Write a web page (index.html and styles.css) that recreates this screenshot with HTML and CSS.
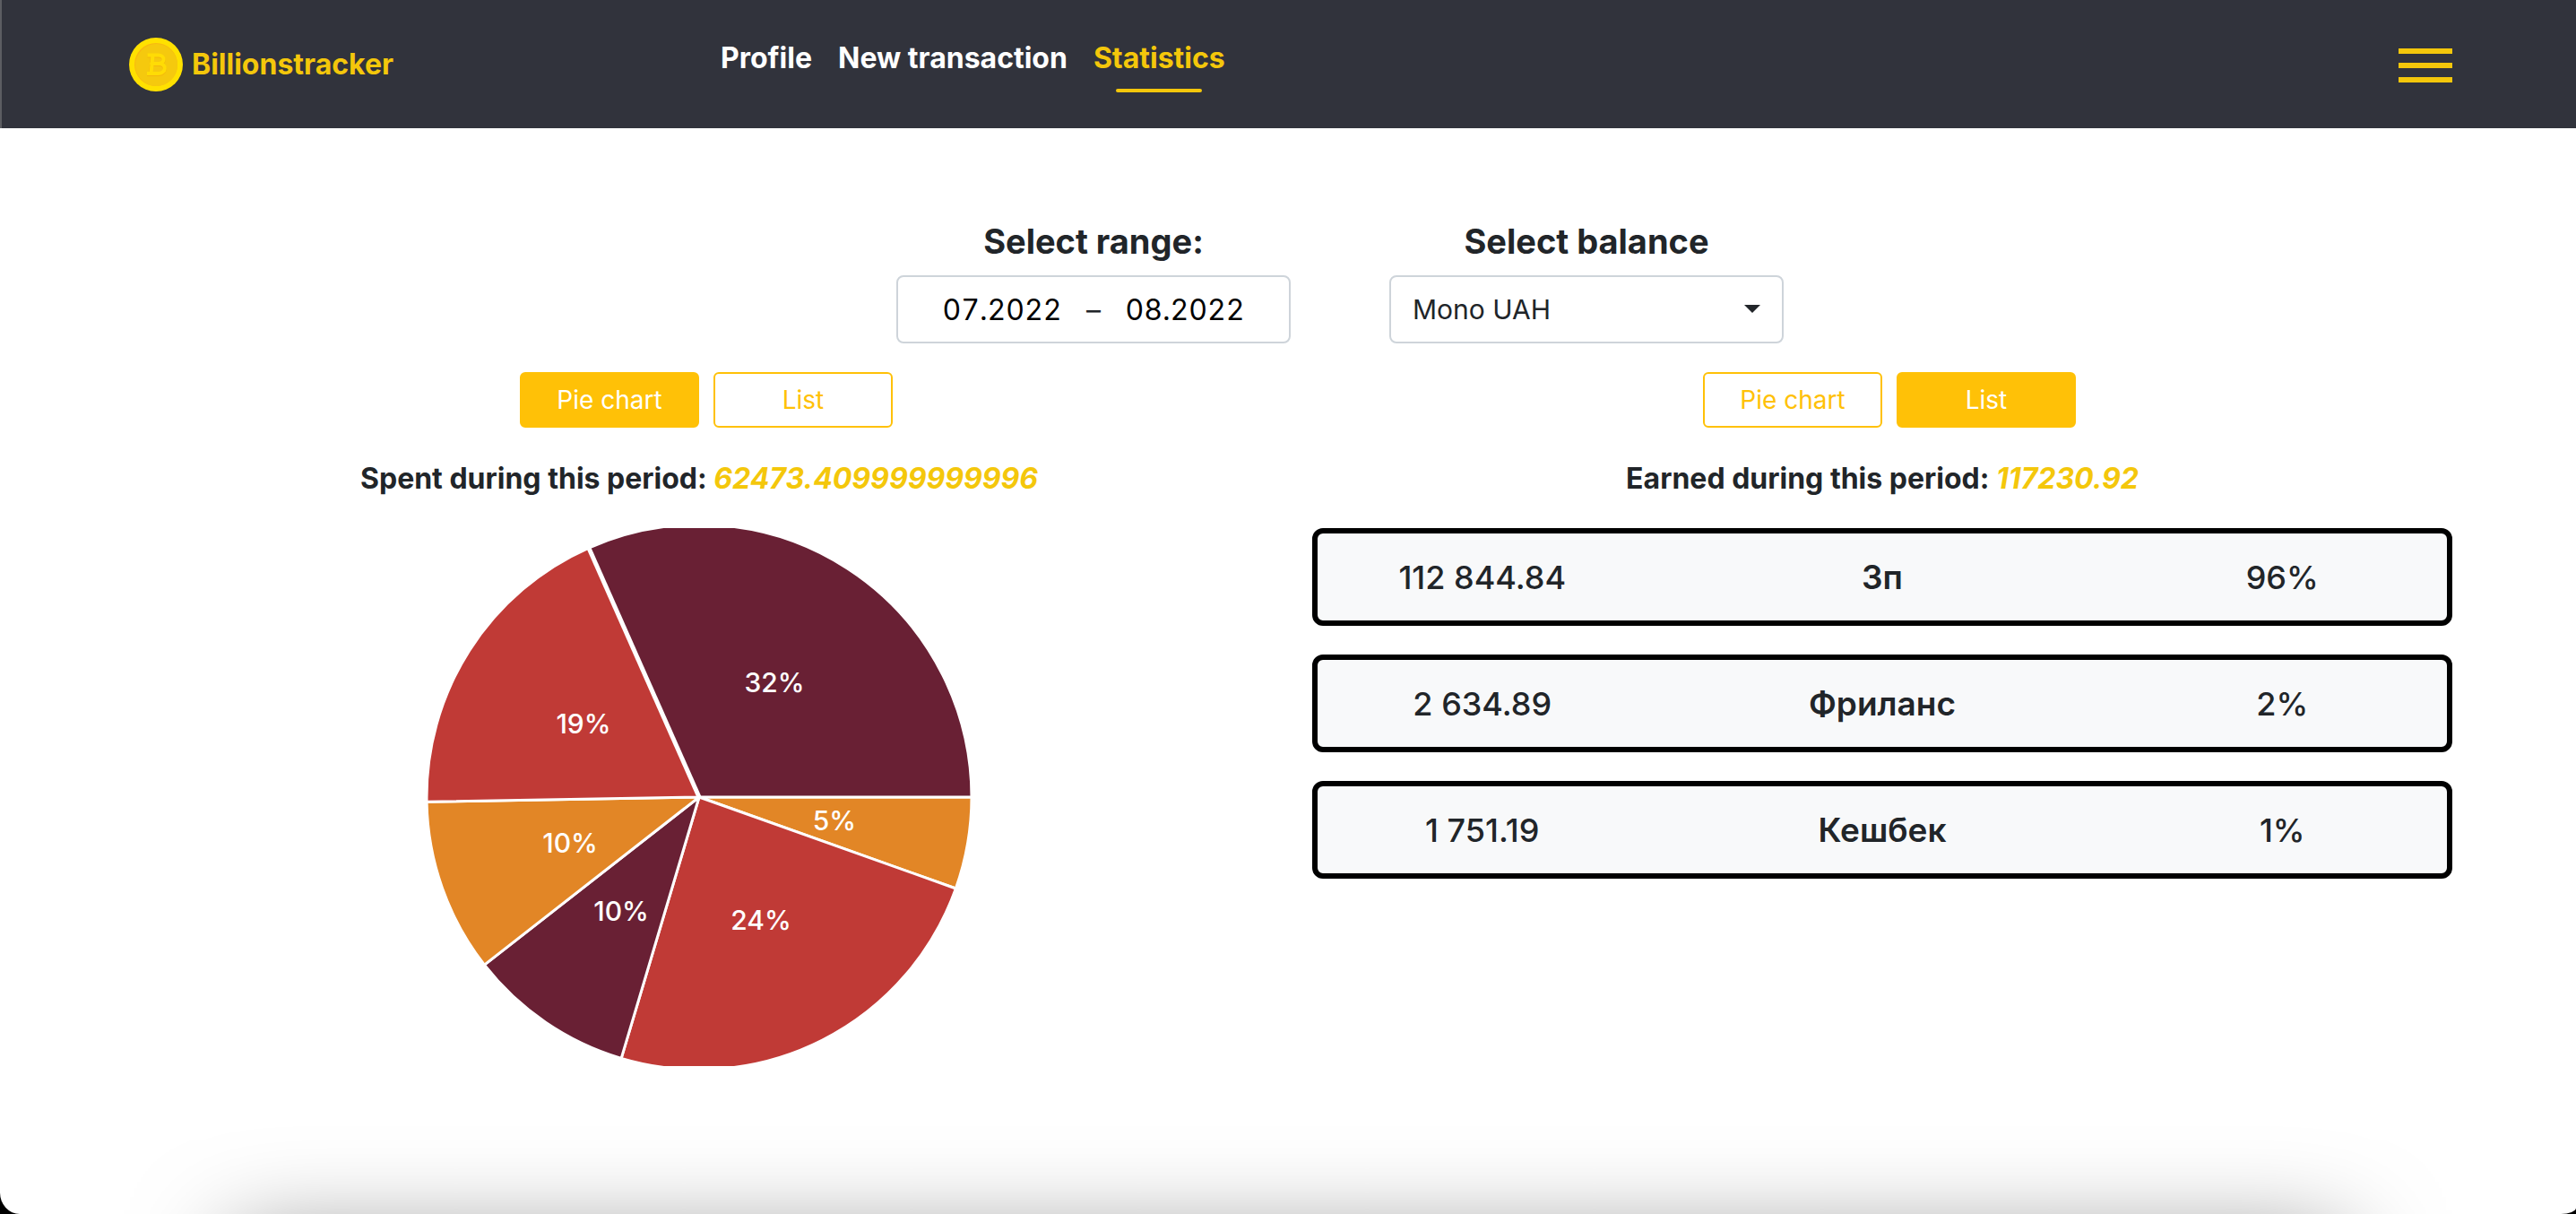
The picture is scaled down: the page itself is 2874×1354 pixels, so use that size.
FILE: index.html
```html
<!DOCTYPE html>
<html lang="en">
<head>
<meta charset="utf-8">
<meta name="viewport" content="width=device-width, initial-scale=1">
<title>Billionstracker</title>
<link rel="stylesheet" href="styles.css">
</head>
<body>
<div class="page">
<header class="header">
  <a class="brand" href="#">
    <svg class="brand-coin" viewBox="0 0 60 60" aria-hidden="true">
      <circle cx="30" cy="30" r="30" fill="#ffe100"/>
      <circle cx="30" cy="30" r="24" fill="#f8b812"/>
      <circle cx="30.500" cy="30.500" r="23.500" fill="#f5c90e"/>
      <g fill="none" stroke-linejoin="round">
        <path d="M20.500 20.500h12c8 0 8 9.500 0 9.500h-7.500h8.500c9 0 8 11-1 11H20M26 20.500L24 41" stroke="#f3b60c" stroke-width="4"/>
        <path d="M20.500 19.500h12c8 0 8 9.500 0 9.500h-7.500h8.500c9 0 8 11-1 11H20M26.500 19.500L24.500 40" stroke="#ffdc05" stroke-width="4"/>
      </g>
    </svg>
    <span>Billionstracker</span>
  </a>
  <nav class="nav">
    <a class="nav-link" href="#">Profile</a>
    <a class="nav-link" href="#">New transaction</a>
    <a class="nav-link nav-link-active" href="#" aria-current="page">Statistics</a>
  </nav>
  <button class="burger" type="button" aria-label="Menu"><span></span><span></span><span></span></button>
</header>

<main class="main">
  <form class="filters">
    <div class="filter">
      <label class="filter-label" for="from">Select range:</label>
      <div class="range">
        <input class="range-input" id="from" type="text" value="07.2022">
        <span>–</span>
        <input class="range-input" type="text" value="08.2022" aria-label="Range end">
      </div>
    </div>
    <div class="filter">
      <label class="filter-label" for="balance">Select balance</label>
      <div class="select-wrap">
        <select class="select" id="balance"><option>Mono UAH</option></select>
      </div>
    </div>
  </form>

  <div class="columns">
    <section class="column">
      <div class="switch">
        <button class="btn btn-active" type="button">Pie chart</button>
        <button class="btn" type="button">List</button>
      </div>
      <h2 class="total">Spent during this period: <em>62473.409999999996</em></h2>
      <svg class="pie" viewBox="-303 -300 606 600" role="img" aria-label="Spending by category">
        <g stroke="#fff" stroke-width="3">
          <path fill="#e28626" d="M0 0L304 0A304 304 0 0 1 286.380 101.970Z"/>
          <path fill="#c03a36" d="M0 0L286.380 101.970A304 304 0 0 1 -86.850 291.330Z"/>
          <path fill="#692034" d="M0 0L-86.850 291.330A304 304 0 0 1 -239.560 187.160Z"/>
          <path fill="#e28626" d="M0 0L-239.560 187.160A304 304 0 0 1 -303.950 5.310Z"/>
          <path fill="#c03a36" d="M0 0L-303.950 5.310A304 304 0 0 1 -123.160 -277.930Z"/>
          <path fill="#692034" d="M0 0L-123.160 -277.930A304 304 0 0 1 304 0Z"/>
        </g>
        <path d="M-123.160 -277.930L0 0" stroke="#fff" stroke-width="5"/>
        <g class="pie-labels">
          <text x="84" y="-117">32%</text>
          <text x="-129" y="-71">19%</text>
          <text x="-144" y="62">10%</text>
          <text x="-87" y="138">10%</text>
          <text x="69" y="148">24%</text>
          <text x="151" y="37">5%</text>
        </g>
      </svg>
    </section>

    <section class="column">
      <div class="switch">
        <button class="btn" type="button">Pie chart</button>
        <button class="btn btn-active" type="button">List</button>
      </div>
      <h2 class="total">Earned during this period: <em>117230.92</em></h2>
      <ul class="list">
        <li class="row"><span>112 844.84</span><strong>Зп</strong><span>96%</span></li>
        <li class="row"><span>2 634.89</span><strong>Фриланс</strong><span>2%</span></li>
        <li class="row"><span>1 751.19</span><strong>Кешбек</strong><span>1%</span></li>
      </ul>
    </section>
  </div>
</main>
</div>
</body>
</html>
```
FILE: styles.css
```css
*, *::before, *::after { box-sizing: border-box; }

body {
  margin: 0;
  background: #000;
  color: #212529;
  font-family: Inter, "Liberation Sans", sans-serif;
  font-size: 32px;
  line-height: 48px;
}

.page {
  position: relative;
  min-height: 100vh;
  overflow: hidden;
  background: #fff;
  border-radius: 0 0 17px 22px / 0 0 7px 24px;
}

/* soft shade along the bottom edge */
.page::after {
  content: "";
  position: absolute;
  top: 100%;
  left: 9%;
  right: 9%;
  height: 200px;
  box-shadow: 0 32px 110px rgba(0, 0, 0, 0.5);
  pointer-events: none;
}

a { color: inherit; text-decoration: none; }
button, input, select { font: inherit; }

.header {
  display: flex;
  align-items: center;
  height: 143px;
  padding: 0 138px 0 142px;
  background: #31333c;
  border-left: 2px solid #5c5d62;
  font-weight: 700;
}

.brand {
  display: flex;
  align-items: center;
  gap: 10px;
  width: 660px;
  color: #f4c70b;
}

.brand-coin { width: 60px; height: 60px; }

.nav { display: flex; gap: 29px; color: #fff; }

.nav-link {
  display: flex;
  flex-direction: column;
  align-items: center;
  gap: 10px;
}

.nav-link::after {
  content: "";
  width: 96px;
  height: 4px;
  border-radius: 2px;
}

.nav-link-active { color: #f4c70b; }
.nav-link-active::after { background: #f4c70b; }

.burger {
  display: flex;
  flex-direction: column;
  gap: 10px;
  width: 60px;
  margin-left: auto;
  padding: 2px 0 0;
  border: 0;
  background: none;
}

.burger span { height: 6px; background: #f4c70b; }

.main { padding: 96px 138px 0 144px; }

.filters {
  display: flex;
  justify-content: center;
  gap: 110px;
  padding-left: 110px;
}

.filter { width: 440px; }

.filter-label {
  display: block;
  margin-bottom: 8px;
  font-size: 38px;
  font-weight: 700;
  line-height: 60px;
  text-align: center;
}

.range, .select {
  width: 100%;
  height: 76px;
  border: 2px solid #ced4da;
  border-radius: 8px;
  background: #fff;
}

.range {
  display: flex;
  align-items: center;
  justify-content: center;
  gap: 16px;
  padding-top: 2px;
}

.range-input {
  width: 156px;
  padding: 0;
  border: 0;
  background: none;
  color: #000;
  font-variant-numeric: tabular-nums;
  text-align: center;
}

.select-wrap { position: relative; }

.select-wrap::after {
  content: "";
  position: absolute;
  top: 33px;
  right: 26px;
  border: 9px solid transparent;
  border-top-color: #212529;
  border-bottom: 0;
  pointer-events: none;
}

.select {
  display: block;
  padding: 0 24px;
  appearance: none;
  color: #212529;
  font-size: 30px;
}

.columns {
  display: grid;
  grid-template-columns: 1fr 1fr;
  gap: 48px;
  padding-top: 32px;
}

.switch {
  display: flex;
  justify-content: center;
  gap: 16px;
  padding-left: 16px;
}

.btn {
  width: 200px;
  height: 62px;
  padding: 0;
  border: 2px solid #ffc107;
  border-radius: 6px;
  background: #fff;
  color: #ffc107;
  font-size: 28px;
}

.btn-active { background: #ffc107; color: #fff; }

.total {
  margin: 33px 0 31px;
  font-size: 32px;
  font-weight: 700;
  line-height: 48px;
  text-align: center;
}

.total em { color: #f4c70b; }

.pie {
  display: block;
  width: 606px;
  max-width: 100%;
  margin: 0 auto;
}

.pie-labels {
  fill: #fff;
  font-size: 30px;
  font-weight: 500;
  text-anchor: middle;
}

.list {
  display: grid;
  gap: 32px;
  margin: 0;
  padding: 0;
  list-style: none;
}

.row {
  display: grid;
  grid-template-columns: 7fr 10fr 7fr;
  align-items: center;
  height: 109px;
  border: 6px solid #000;
  border-radius: 12px;
  background: #f8f9fa;
  font-size: 36px;
  font-weight: 500;
  text-align: center;
}

.row strong { font-size: 37px; font-weight: 600; }
```
